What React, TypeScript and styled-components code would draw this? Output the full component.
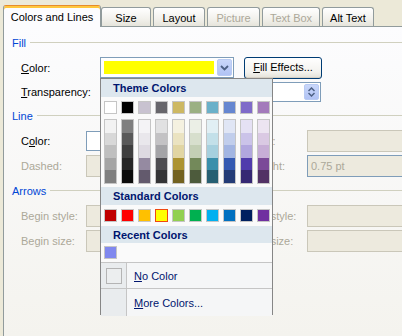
import React from "react";
import styled, { createGlobalStyle, css } from "styled-components";

const GlobalStyle = createGlobalStyle`
  html, body {
    margin: 0;
    padding: 0;
  }
  body {
    font-family: "Liberation Sans", Arial, sans-serif;
    font-size: 11px;
    color: #000;
  }
`;

const disabledText = "#ACA899";

const Window = styled.div`
  width: 402px;
  height: 336px;
  overflow: hidden;
  background: #ECE9D8;
  display: flex;
  flex-direction: column;
`;

const TabStrip = styled.div`
  height: 26px;
  padding-left: 3px;
  display: flex;
  align-items: flex-end;
  box-sizing: border-box;
  flex: 0 0 auto;
`;

type TabProps = { $width: number; $active?: boolean; $disabled?: boolean; $gap?: number };

const Tab = styled.div<TabProps>`
  box-sizing: border-box;
  width: ${(p) => p.$width}px;
  margin-right: ${(p) => p.$gap ?? 0}px;
  flex: 0 0 auto;
  display: flex;
  align-items: center;
  justify-content: center;
  border: 1px solid #919B9C;
  border-bottom: none;
  border-radius: 3px 3px 0 0;
  color: ${(p) => (p.$disabled ? disabledText : "#000")};
  white-space: nowrap;
  ${(p) =>
    p.$active
      ? css`
          height: 22px;
          margin-bottom: -1px;
          position: relative;
          z-index: 1;
          background: #FCFCFE;
          border-top: 1px solid #E68B2C;
          box-shadow: inset 0 2px 0 #FFC73C;
          padding-top: 1px;
        `
      : css`
          height: 19px;
          background: linear-gradient(#FFFFFF, #F2F1EC 60%, #E6E4DB);
          padding-top: 2px;
        `}
`;

const Panel = styled.div`
  flex: 1 1 auto;
  margin-left: 3px;
  border-top: 1px solid #919B9C;
  border-left: 1px solid #919B9C;
  background: linear-gradient(#FCFCFE, #F4F3EE);
  display: flex;
  flex-direction: column;
  padding-top: 9px;
`;

const SectionHeader = styled.div<{ $top?: number }>`
  height: 14px;
  margin-top: ${(p) => p.$top ?? 0}px;
  padding-left: 8px;
  display: flex;
  align-items: center;
  gap: 4px;
  color: #0046D5;

  &::after {
    content: "";
    flex: 1;
    height: 1px;
    margin-top: -1px;
    background: #D0D0BF;
  }
`;

const Row = styled.div<{ $top: number; $height: number }>`
  height: ${(p) => p.$height}px;
  margin-top: ${(p) => p.$top}px;
  padding-left: 17px;
  display: flex;
  align-items: center;
`;

const Label = styled.span<{ $width: number; $disabled?: boolean }>`
  flex: 0 0 ${(p) => p.$width}px;
  color: ${(p) => (p.$disabled ? disabledText : "#000")};
  white-space: nowrap;
`;

const Key = styled.span`
  text-decoration: underline;
  text-underline-offset: 1px;
`;

const ComboWrap = styled.div`
  position: relative;
  flex: 0 0 134px;
  height: 21px;
`;

const Combo = styled.div`
  box-sizing: border-box;
  height: 21px;
  border: 1px solid #7F9DB9;
  background: #fff;
  display: flex;
  align-items: center;
  padding: 0 1px 0 3px;
`;

const SelectedSwatch = styled.div`
  width: 110px;
  height: 13px;
  background: #FFFF00;
  margin-right: auto;
`;

const BlueButton = styled.div<{ $height: number }>`
  box-sizing: border-box;
  width: 15px;
  height: ${(p) => p.$height}px;
  border: 1px solid #B9CBF3;
  border-radius: 2px;
  background: linear-gradient(#C9D7FA, #B1C3F5);
  display: flex;
  flex-direction: column;
  align-items: center;
  justify-content: center;
`;

const PushButton = styled.div`
  box-sizing: border-box;
  margin-left: 10px;
  width: 78px;
  height: 22px;
  border: 1px solid #003C74;
  border-radius: 3px;
  background: linear-gradient(#FFFFFF, #F3F2EE 70%, #E3E1D8);
  box-shadow: inset 0 -1px 0 #D6D0C5;
  display: flex;
  align-items: center;
  justify-content: center;
  padding-bottom: 1px;
`;

const SpinBox = styled.div`
  box-sizing: border-box;
  margin-left: 144px;
  width: 77px;
  height: 20px;
  border: 1px solid #7F9DB9;
  background: #fff;
  display: flex;
  align-items: center;
  justify-content: flex-end;
  padding-right: 1px;
`;

type FieldProps = { $width: number; $enabled?: boolean; $blueBorder?: boolean };

const Field = styled.div<FieldProps>`
  box-sizing: border-box;
  flex: 0 0 ${(p) => p.$width}px;
  height: ${(p) => (p.$enabled ? 20 : 22)}px;
  border: 1px solid ${(p) => (p.$enabled || p.$blueBorder ? "#7F9DB9" : "#CAC7B9")};
  background: ${(p) => (p.$enabled ? "#fff" : "#EDEADE")};
  color: ${disabledText};
  padding-left: 3px;
  display: flex;
  align-items: center;
`;

const Spacer = styled.div<{ $width: number }>`
  flex: 0 0 ${(p) => p.$width}px;
`;

/* ---------- colour menu ---------- */

const Menu = styled.div`
  position: absolute;
  top: 100%;
  left: 0;
  z-index: 10;
  box-sizing: border-box;
  width: 173px;
  height: 237px;
  border: 1px solid #868686;
  background: #FAFAFA;
  display: flex;
  flex-direction: column;
`;

const Band = styled.div<{ $top?: number; $height: number }>`
  flex: 0 0 ${(p) => p.$height}px;
  margin-top: ${(p) => p.$top ?? 0}px;
  background: #DDE7EE;
  color: #00156E;
  font-weight: bold;
  padding-left: 12px;
  display: flex;
  align-items: center;
`;

const SwatchRow = styled.div<{ $top: number }>`
  margin-top: ${(p) => p.$top}px;
  padding-left: 3px;
  display: flex;
  gap: 4px;
`;

const Swatch = styled.div<{ $color: string; $selected?: boolean }>`
  box-sizing: border-box;
  width: 13px;
  height: 13px;
  border: 1px solid ${(p) => (p.$selected ? "#EF4810" : "#C5C5C5")};
  background: ${(p) => p.$color};
`;

const ShadeColumn = styled.div`
  box-sizing: border-box;
  width: 13px;
  height: 65px;
  border: 1px solid #C5C5C5;
  display: flex;
  flex-direction: column;
`;

const Shade = styled.div<{ $color: string }>`
  flex: 1;
  background: ${(p) => p.$color};
`;

const MenuItem = styled.div<{ $top?: number; $height: number }>`
  flex: 0 0 ${(p) => p.$height}px;
  margin-top: ${(p) => p.$top ?? 0}px;
  border-top: 1px solid #C5C5C5;
  display: flex;
  color: #00156E;
  background: #F5F6F7;
`;

const IconColumn = styled.div`
  flex: 0 0 25px;
  border-right: 1px solid #C5C5C5;
  background: #E9ECEE;
  display: flex;
  align-items: center;
  justify-content: center;
`;

const NoColorBox = styled.div`
  box-sizing: border-box;
  width: 16px;
  height: 16px;
  border: 1px solid #B4B4B4;
  background: #ECEEEF;
`;

const ItemText = styled.div`
  padding-left: 7px;
  display: flex;
  align-items: center;
`;

const themeTop = ["#FFFFFF", "#000000", "#C8C2D0", "#67666B", "#CDB862", "#9BB083", "#6AB0C9", "#6586D0", "#7F6BC9", "#A37ABB"];

const themeShades = [
  ["#F2F2F2", "#D8D8D8", "#BFBFBF", "#A5A5A5", "#7F7F7F"],
  ["#7F7F7F", "#595959", "#3F3F3F", "#262626", "#0C0C0C"],
  ["#F4F3F6", "#E9E7EC", "#DEDAE2", "#958AA1", "#635A6D"],
  ["#E1E1E2", "#C3C2C4", "#A4A4A7", "#4E4D51", "#343436"],
  ["#F5F1E0", "#EBE3C1", "#E1D5A3", "#AC9332", "#736221"],
  ["#EBEFE6", "#D7DFCD", "#C3CFB5", "#73895A", "#4D5B3C"],
  ["#E1EFF4", "#C3E0E9", "#A6D0DE", "#3A8FAB", "#265F72"],
  ["#E0E6F5", "#C1CEEC", "#A2B5E2", "#3459B1", "#233B76"],
  ["#E5E1F4", "#CBC3E9", "#B1A6DE", "#503BAC", "#352873"],
  ["#ECE4F1", "#DAC9E3", "#C7AED6", "#7B4A98", "#523265"],
];

const standard = ["#C00000", "#FF0000", "#FFC000", "#FFFF00", "#92D050", "#00B050", "#00B0F0", "#0070C0", "#002060", "#7030A0"];

const Chevron = ({ up }: { up?: boolean }) => (
  <svg width="9" height="6" viewBox="0 0 9 6">
    <path d={up ? "M1 5 L4.5 1.5 L8 5" : "M1 1 L4.5 4.5 L8 1"} fill="none" stroke="#4D6185" strokeWidth="1.8" />
  </svg>
);

const SmallArrow = ({ up }: { up?: boolean }) => (
  <svg width="7" height="5" viewBox="0 0 7 5">
    <path d={up ? "M0.5 4 L3.5 1 L6.5 4" : "M0.5 1 L3.5 4 L6.5 1"} fill="none" stroke="#4D6185" strokeWidth="1.5" />
  </svg>
);

const ColorMenu = () => (
  <Menu>
    <Band $height={18}>Theme Colors</Band>
    <SwatchRow $top={4}>
      {themeTop.map((c) => (
        <Swatch key={c} $color={c} />
      ))}
    </SwatchRow>
    <SwatchRow $top={5}>
      {themeShades.map((col, i) => (
        <ShadeColumn key={i}>
          {col.map((c) => (
            <Shade key={c} $color={c} />
          ))}
        </ShadeColumn>
      ))}
    </SwatchRow>
    <Band $top={3} $height={18}>Standard Colors</Band>
    <SwatchRow $top={4}>
      {standard.map((c) => (
        <Swatch key={c} $color={c} $selected={c === "#FFFF00"} />
      ))}
    </SwatchRow>
    <Band $top={4} $height={17}>Recent Colors</Band>
    <SwatchRow $top={3}>
      <Swatch $color="#8088EE" />
    </SwatchRow>
    <MenuItem $top={3} $height={25}>
      <IconColumn>
        <NoColorBox />
      </IconColumn>
      <ItemText>
        <span><Key>N</Key>o Color</span>
      </ItemText>
    </MenuItem>
    <MenuItem $height={27}>
      <IconColumn />
      <ItemText>
        <span><Key>M</Key>ore Colors...</span>
      </ItemText>
    </MenuItem>
  </Menu>
);

export default function App() {
  return (
    <Window>
      <GlobalStyle />
      <TabStrip>
        <Tab $width={98} $active>Colors and Lines</Tab>
        <Tab $width={50} $gap={2}>Size</Tab>
        <Tab $width={52} $gap={2}>Layout</Tab>
        <Tab $width={53} $gap={2} $disabled>Picture</Tab>
        <Tab $width={58} $gap={2} $disabled>Text Box</Tab>
        <Tab $width={52}>Alt Text</Tab>
      </TabStrip>
      <Panel>
        <SectionHeader>Fill</SectionHeader>
        <Row $top={6} $height={23}>
          <Label $width={79}><Key>C</Key>olor:</Label>
          <ComboWrap>
            <Combo>
              <SelectedSwatch />
              <BlueButton $height={17}>
                <Chevron />
              </BlueButton>
            </Combo>
            <ColorMenu />
          </ComboWrap>
          <PushButton><span><Key>F</Key>ill Effects...</span></PushButton>
        </Row>
        <Row $top={3} $height={20}>
          <Label $width={79}><Key>T</Key>ransparency:</Label>
          <SpinBox>
            <BlueButton $height={16}>
              <SmallArrow up />
              <SmallArrow />
            </BlueButton>
          </SpinBox>
        </Row>

        <SectionHeader $top={7}>Line</SectionHeader>
        <Row $top={7} $height={22}>
          <Label $width={65}>C<Key>o</Key>lor:</Label>
          <Field $width={140} $enabled />
          <Spacer $width={22} />
          <Label $width={59} $disabled>Style:</Label>
          <Field $width={100} />
        </Row>
        <Row $top={3} $height={22}>
          <Label $width={65} $disabled>Dashed:</Label>
          <Field $width={140} />
          <Spacer $width={22} />
          <Label $width={59} $disabled>Weight:</Label>
          <Field $width={100} $blueBorder>0.75 pt</Field>
        </Row>

        <SectionHeader $top={7}>Arrows</SectionHeader>
        <Row $top={7} $height={22}>
          <Label $width={65} $disabled>Begin style:</Label>
          <Field $width={140} />
          <Spacer $width={22} />
          <Label $width={59} $disabled>End style:</Label>
          <Field $width={100} />
        </Row>
        <Row $top={3} $height={22}>
          <Label $width={65} $disabled>Begin size:</Label>
          <Field $width={140} />
          <Spacer $width={22} />
          <Label $width={59} $disabled>End size:</Label>
          <Field $width={100} />
        </Row>
      </Panel>
    </Window>
  );
}
